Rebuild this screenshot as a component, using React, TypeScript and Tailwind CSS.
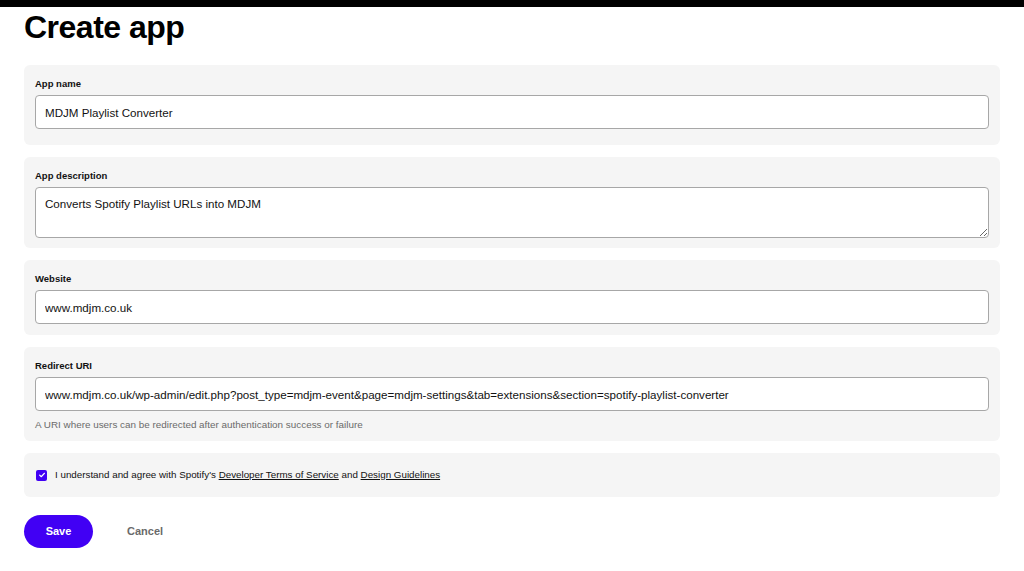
import React from 'react';

const font = { fontFamily: '"Liberation Sans", Arial, sans-serif' };

function Field({ label, value, multiline }: { label: string; value: string; multiline?: boolean }) {
  return (
    <>
      <label className="block text-[9.5px] font-bold text-[#121212] leading-[14px] mb-[4px]">{label}</label>
      {multiline ? (
        <textarea
          readOnly
          defaultValue={value}
          className="block w-full h-[51px] rounded-[4px] border border-[#a7a7a7] bg-white px-[9px] py-[9px] text-[11.6px] leading-[14px] text-[#121212] resize-y outline-none"
        />
      ) : (
        <input
          readOnly
          defaultValue={value}
          className="block w-full h-[34px] rounded-[4px] border border-[#a7a7a7] bg-white px-[9px] text-[11.6px] text-[#121212] outline-none"
        />
      )}
    </>
  );
}

export default function App() {
  return (
    <div className="min-h-screen bg-white" style={font}>
      <div className="h-[7px] bg-black" />
      <div className="px-[24px]">
        <h1 className="text-[32px] font-bold text-black leading-[34px] pt-[3px] tracking-[-0.5px]">Create app</h1>
        <div className="mt-[21px] flex flex-col gap-[12px] w-[976px]">
          <div className="rounded-[6px] bg-[#f5f5f5] px-[11px] pt-[12px] pb-[16px]">
            <Field label="App name" value="MDJM Playlist Converter" />
          </div>
          <div className="rounded-[6px] bg-[#f5f5f5] px-[11px] pt-[12px] pb-[10px]">
            <Field label="App description" value="Converts Spotify Playlist URLs into MDJM" multiline />
          </div>
          <div className="rounded-[6px] bg-[#f5f5f5] px-[11px] pt-[12px] pb-[11px]">
            <Field label="Website" value="www.mdjm.co.uk" />
          </div>
          <div className="rounded-[6px] bg-[#f5f5f5] px-[11px] pt-[12px] pb-[10px]">
            <Field
              label="Redirect URI"
              value="www.mdjm.co.uk/wp-admin/edit.php?post_type=mdjm-event&page=mdjm-settings&tab=extensions&section=spotify-playlist-converter"
            />
            <p className="mt-[8px] text-[9.9px] leading-[12px] text-[#6a6a6a]">
              A URI where users can be redirected after authentication success or failure
            </p>
          </div>
          <div className="rounded-[6px] bg-[#f5f5f5] px-[12px] h-[44px] flex items-center gap-[8px]">
            <span className="flex h-[11px] w-[11px] items-center justify-center rounded-[2px] bg-[#4100f4]">
              <svg viewBox="0 0 12 12" className="h-[8px] w-[8px]" fill="none" stroke="white" strokeWidth="2" strokeLinecap="round" strokeLinejoin="round">
                <path d="M2.5 6.2 5 8.5 9.5 3.5" />
              </svg>
            </span>
            <span className="text-[9.8px] text-[#121212]">
              I understand and agree with Spotify's <span className="underline">Developer Terms of Service</span> and{' '}
              <span className="underline">Design Guidelines</span>
            </span>
          </div>
        </div>
        <div className="mt-[18px] flex items-center">
          <button className="h-[33px] w-[69px] rounded-full bg-[#4100f4] text-[11px] font-bold text-white">Save</button>
          <button className="ml-[34px] text-[11px] font-bold text-[#6a6a6a]">Cancel</button>
        </div>
      </div>
    </div>
  );
}
